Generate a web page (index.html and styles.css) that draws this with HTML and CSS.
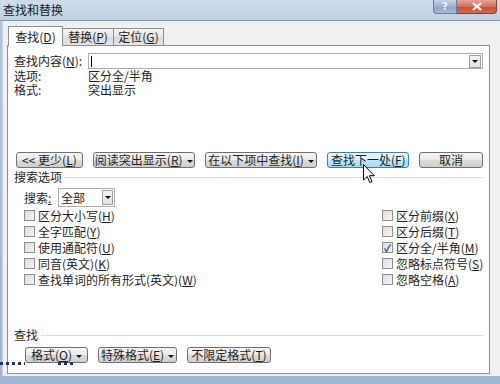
FILE: index.html
```html
<!DOCTYPE html>
<html lang="zh-CN">
<head>
  <meta charset="UTF-8" />
  <title>查找和替换</title>
  <link rel="stylesheet" href="styles.css">
</head>
<body>
<div class="window">

  <div class="titlebar">
    <span class="title">查找和替换</span>
    <div class="caption">
      <span class="cap-help">?</span>
      <span class="cap-close">
        <svg width="10" height="9" viewBox="0 0 10 9"><path d="M1 1 L9 8 M9 1 L1 8" stroke="#fff" stroke-width="2.2" fill="none"/></svg>
      </span>
    </div>
  </div>

  <div class="client">
    <div class="tabs">
      <div class="tab active">查找(<u>D</u>)</div>
      <div class="tab">替换(<u>P</u>)</div>
      <div class="tab">定位(<u>G</u>)</div>
    </div>

    <div class="panel">
      <div class="find-row">
        <span class="find-label">查找内容(<u>N</u>):</span>
        <div class="combo">
          <span class="caret"></span>
          <span class="drop-btn"><i class="tri"></i></span>
        </div>
      </div>
      <div class="info-row"><span class="info-label">选项:</span><span>区分全/半角</span></div>
      <div class="info-row"><span class="info-label">格式:</span><span>突出显示</span></div>

      <div class="btn-row">
        <div class="btn w-less">&lt;&lt; 更少(<u>L</u>)</div>
        <div class="btn w-read">阅读突出显示(<u>R</u>)<i class="tri small"></i></div>
        <div class="btn w-in">在以下项中查找(<u>I</u>)<i class="tri small"></i></div>
        <div class="btn hover w-next">查找下一处(<u>F</u>)</div>
        <div class="btn w-cancel">取消</div>
      </div>

      <div class="group-title"><span>搜索选项</span><span class="rule"></span></div>

      <div class="search-row">
        <span class="search-label">搜索<u>:</u></span>
        <div class="select">
          <span class="select-val">全部</span>
          <span class="drop-btn"><i class="tri"></i></span>
        </div>
      </div>

      <div class="options">
        <div class="opt-col">
          <label class="check"><span class="box"></span>区分大小写(<u>H</u>)</label>
          <label class="check"><span class="box"></span>全字匹配(<u>Y</u>)</label>
          <label class="check"><span class="box"></span>使用通配符(<u>U</u>)</label>
          <label class="check"><span class="box"></span>同音(英文)(<u>K</u>)</label>
          <label class="check"><span class="box"></span>查找单词的所有形式(英文)(<u>W</u>)</label>
        </div>
        <div class="opt-col">
          <label class="check"><span class="box"></span>区分前缀(<u>X</u>)</label>
          <label class="check"><span class="box"></span>区分后缀(<u>T</u>)</label>
          <label class="check"><span class="box checked">&#10003;</span>区分全/半角(<u>M</u>)</label>
          <label class="check"><span class="box"></span>忽略标点符号(<u>S</u>)</label>
          <label class="check"><span class="box"></span>忽略空格(<u>A</u>)</label>
        </div>
      </div>

      <div class="group-title find-group"><span>查找</span><span class="rule"></span></div>

      <div class="btn-row bottom">
        <div class="btn w-fmt">格式(<u>O</u>)<i class="tri small"></i></div>
        <div class="btn w-special">特殊格式(<u>E</u>)<i class="tri small"></i></div>
        <div class="btn w-nofmt">不限定格式(<u>T</u>)</div>
      </div>
    </div>
  </div>

  <!-- focus rectangle left on screen -->
  <div class="dots dots-a"></div>
  <div class="dots dots-b"></div>

  <svg class="cursor" width="13" height="20" viewBox="0 0 13 20">
    <path d="M0.5 0.5 L0.5 16 L4.2 12.5 L6.8 18.5 L9 17.6 L6.4 11.7 L11.3 11.7 Z" fill="#fff" stroke="#000" stroke-width="1"/>
  </svg>
</div>
</body>
</html>
```

FILE: styles.css
```css
* {
  box-sizing: border-box;
}
body {
  margin: 0;
  width: 500px;
  height: 384px;
  overflow: hidden;
  background: #a9bdd8;
  font-family: "Noto Sans CJK SC", "Liberation Sans", sans-serif;
  font-size: 12px;
  color: #1e1e1e;
}
u {
  text-decoration: underline;
  text-underline-offset: 1px;
}
.window {
  position: relative;
  width: 500px;
  height: 384px;
  background: linear-gradient(#b3c6df, #9fb5d3);
}

/* title bar */
.titlebar {
  height: 21px;
  display: flex;
  align-items: flex-start;
  background: linear-gradient(#cfdcec, #bfd0e5);
  border-bottom: 1px solid #7f95b4;
}
.title {
  padding: 3px 0 0 3px;
  line-height: 14px;
  color: #1a1a1a;
}
.caption {
  margin-left: auto;
  margin-right: 3px;
  display: flex;
}
.cap-help {
  width: 24px;
  height: 14px;
  border: 1px solid #6a7e9c;
  border-top: none;
  border-radius: 0 0 0 4px;
  background: linear-gradient(#c6d4e6, #9fb2cc 50%, #8ea3c1 51%, #a7bad3);
  color: #f4f7fb;
  font-family: "DejaVu Sans", sans-serif;
  font-weight: bold;
  font-size: 10px;
  line-height: 13px;
  text-align: center;
}
.cap-close {
  width: 40px;
  height: 14px;
  border: 1px solid #8a3a35;
  border-top: none;
  border-left: none;
  border-radius: 0 0 4px 0;
  background: linear-gradient(#e5a294, #d0705f 50%, #c24a38 51%, #d26c52);
  display: flex;
  align-items: center;
  justify-content: center;
}

/* client area */
.client {
  height: 355px;
  margin-left: 2px;
  border-left: 1px solid #c9d3df;
  background: #f0f0f0;
  padding: 5px 10px 0 4px;
}
.tabs {
  display: flex;
  align-items: flex-end;
  height: 20px;
  padding-left: 1px;
  margin-bottom: -1px;
  position: relative;
  z-index: 1;
}
.tab {
  height: 17px;
  margin-bottom: 1px;
  line-height: 15px;
  text-align: center;
  white-space: nowrap;
  border: 1px solid #8c8f96;
  border-bottom: none;
  border-left: none;
  background: linear-gradient(#f3f3f3, #e6e6e6 50%, #dadada 51%, #e4e4e4);
}
.tab:nth-child(2) {
  width: 51px;
}
.tab:nth-child(3) {
  width: 50px;
}
.tab.active {
  width: 55px;
  height: 20px;
  margin-bottom: 0;
  padding-top: 2px;
  border-left: 1px solid #8c8f96;
  background: #fff;
}
.panel {
  height: 329px;
  border: 1px solid #8c8f96;
  background: #fff;
  padding: 7px 6px 0 6px;
}

/* find what */
.find-row {
  display: flex;
  height: 16px;
  align-items: center;
}
.find-label {
  width: 74px;
  line-height: 14px;
  white-space: nowrap;
}
.combo {
  position: relative;
  flex: 1;
  height: 16px;
  border: 1px solid #a9acb4;
  background: #fff;
  display: flex;
  align-items: center;
  justify-content: space-between;
  padding: 0 1px 0 2px;
}
.caret {
  width: 1px;
  height: 11px;
  background: #000;
}
.drop-btn {
  width: 12px;
  height: 13px;
  border: 1px solid #a0a0a0;
  background: linear-gradient(#f6f6f6, #e2e2e2);
  display: flex;
  align-items: center;
  justify-content: center;
}
.tri {
  display: inline-block;
  width: 0;
  height: 0;
  border-left: 3px solid transparent;
  border-right: 3px solid transparent;
  border-top: 3px solid #111;
}
.tri.small {
  margin-left: 4px;
  vertical-align: middle;
}
.info-row {
  display: flex;
  line-height: 14px;
}
.info-label {
  width: 74px;
}

/* buttons */
.btn-row {
  display: flex;
  gap: 10px;
  margin-top: 55px;
  padding-left: 2px;
}
.btn {
  height: 16px;
  border: 1px solid #707070;
  border-radius: 3px;
  background: linear-gradient(#f4f4f4, #ebebeb 50%, #dcdcdc 51%, #cfcfcf);
  line-height: 14px;
  text-align: center;
  white-space: nowrap;
}
.btn.hover {
  border-color: #3c7fb1;
  background: linear-gradient(#eaf6fd, #d9f0fc 50%, #bee6fd 51%, #a7d9f5);
}
.w-less { width: 67px; }
.w-read { width: 102px; }
.w-in { width: 113px; }
.w-next { width: 82px; }
.w-cancel { width: 64px; }

.group-title {
  display: flex;
  align-items: center;
  margin-top: 2px;
  line-height: 14px;
}
.group-title .rule {
  flex: 1;
  height: 1px;
  margin-left: 3px;
  background: #d6dde3;
}
.find-group {
  margin-top: 41px;
}

/* search direction */
.search-row {
  display: flex;
  align-items: center;
  margin-top: 4px;
  padding-left: 10px;
  height: 19px;
}
.search-label {
  width: 34px;
}
.select {
  width: 57px;
  height: 19px;
  border: 1px solid #a9acb4;
  display: flex;
  align-items: center;
  justify-content: space-between;
  padding: 0 1px 0 2px;
}
.select .drop-btn {
  width: 11px;
  height: 15px;
}

/* check boxes */
.options {
  display: grid;
  grid-template-columns: 358px 1fr;
  padding-left: 10px;
}
.check {
  display: flex;
  align-items: center;
  height: 16px;
  white-space: nowrap;
}
.box {
  width: 11px;
  height: 11px;
  margin-right: 3px;
  border: 1px solid #8f8f8f;
  background: linear-gradient(135deg, #dcdcdc, #f6f6f6);
  color: #21398a;
  font-size: 10px;
  line-height: 9px;
  text-align: center;
  font-weight: bold;
}

.btn-row.bottom {
  margin-top: 5px;
  padding-left: 11px;
}
.w-fmt { width: 63px; }
.w-special { width: 79px; }
.w-nofmt { width: 84px; }

/* overlays */
.dots {
  position: absolute;
  top: 362px;
  height: 3px;
  background: repeating-linear-gradient(90deg, #23306b 0 3px, transparent 3px 6px);
}
.dots-a {
  left: 0;
  width: 25px;
}
.dots-b {
  left: 58px;
  width: 15px;
}
.cursor {
  position: absolute;
  left: 363px;
  top: 164px;
}
```
